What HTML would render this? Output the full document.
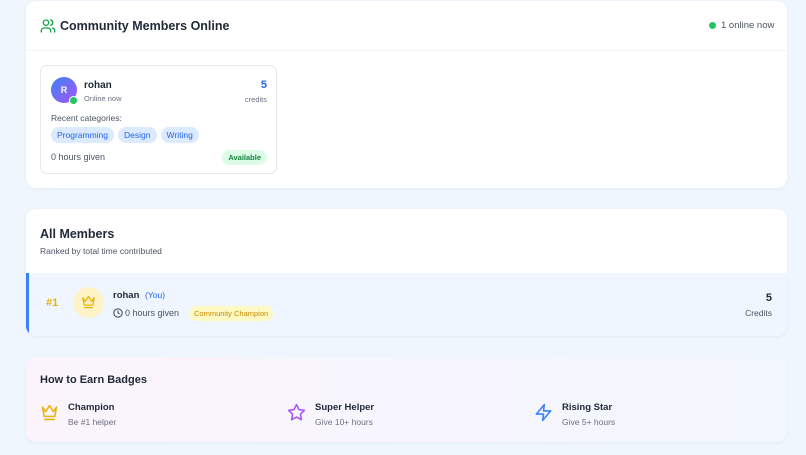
<!DOCTYPE html><html><head><style>
*{box-sizing:border-box;margin:0;padding:0}
body{width:806px;height:455px;overflow:hidden;background:#eff6fe;font-family:"Liberation Sans",sans-serif;color:#1f2937;position:relative}
.card{position:absolute;left:26px;width:761px;background:#fff;border-radius:10px;box-shadow:0 1px 3px rgba(0,0,0,.05)}
.abs{position:absolute}
.tag{display:inline-block;background:#dbeafe;color:#2563eb;font-size:8.5px;padding:3px 6px;border-radius:9px;margin-right:4px}
</style></head><body>
<div class="card" style="top:1px;height:187px">
 <div class="abs" style="left:0;right:0;top:49px;border-top:1px solid #f1f3f6"></div>
 <svg class="abs" style="left:14px;top:17px" width="16" height="16" viewBox="0 0 24 24" fill="none" stroke="#16a34a" stroke-width="2" stroke-linecap="round"><circle cx="9" cy="7" r="4"/><path d="M2 21v-2a4 4 0 0 1 4-4h6a4 4 0 0 1 4 4v2"/><path d="M16 3.1a4 4 0 0 1 0 7.8M22 21v-2a4 4 0 0 0-3-3.9"/></svg>
 <div class="abs" style="left:34px;top:18px;font-size:12.5px;font-weight:bold;color:#1f2937">Community Members Online</div>
 <div class="abs" style="left:683px;top:21px;width:7px;height:7px;border-radius:50%;background:#22c55e"></div>
 <div class="abs" style="left:695px;top:19px;font-size:9.5px;color:#4b5563">1 online now</div>
 <div class="abs" style="left:14px;top:64px;width:237px;height:109px;border:1px solid #e5e7eb;border-radius:7px">
  <div class="abs" style="left:10px;top:11px;width:26px;height:26px;border-radius:50%;background:linear-gradient(135deg,#3b82f6,#a855f7);color:#fff;font-size:9px;font-weight:bold;text-align:center;line-height:26px">R</div>
  <div class="abs" style="left:28px;top:30px;width:9px;height:9px;border-radius:50%;background:#22c55e;border:1.5px solid #fff"></div>
  <div class="abs" style="left:43px;top:14px;font-size:10px;font-weight:bold">rohan</div>
  <div class="abs" style="left:43px;top:28px;font-size:7.5px;color:#6b7280">Online now</div>
  <div class="abs" style="right:9px;top:13px;font-size:11px;font-weight:bold;color:#2563eb">5</div>
  <div class="abs" style="right:9px;top:29px;font-size:7.5px;color:#6b7280">credits</div>
  <div class="abs" style="left:10px;top:47px;font-size:8.5px;color:#4b5563">Recent categories:</div>
  <div class="abs" style="left:10px;top:59px;white-space:nowrap"><span class="tag">Programming</span><span class="tag">Design</span><span class="tag">Writing</span></div>
  <div class="abs" style="left:10px;top:86px;font-size:9px;color:#4b5563">0 hours given</div>
  <div class="abs" style="right:9px;top:84px;font-size:7.5px;color:#15803d;background:#dcfce7;padding:3px 6px;border-radius:8px;font-weight:bold">Available</div>
 </div>
</div>
<div class="card" style="top:209px;height:127px;overflow:hidden">
 <div class="abs" style="left:14px;top:18px;font-size:12.5px;font-weight:bold">All Members</div>
 <div class="abs" style="left:14px;top:37px;font-size:8.5px;color:#4b5563">Ranked by total time contributed</div>
 <div class="abs" style="left:0;right:0;top:64px;height:63px;background:#eff6ff;border-left:3px solid #3b82f6">
  <div class="abs" style="left:17px;top:24px;font-size:11px;font-weight:bold;color:#eab308">#1</div>
  <div class="abs" style="left:44px;top:14px;width:31px;height:31px;border-radius:50%;background:#fef3c7"></div>
  <svg class="abs" style="left:52px;top:22px" width="15" height="14" viewBox="0 0 24 22" fill="none" stroke="#eab308" stroke-width="2" stroke-linejoin="round"><path d="M3 4l4 6 5-8 5 8 4-6-2 12H5z"/><path d="M5 20h14"/></svg>
  <div class="abs" style="left:84px;top:17px;font-size:9.5px;font-weight:bold">rohan <span style="color:#2563eb;font-weight:normal;font-size:8.5px;margin-left:3px">(You)</span></div>
  <svg class="abs" style="left:84px;top:35px" width="10" height="10" viewBox="0 0 24 24" fill="none" stroke="#374151" stroke-width="2.4"><circle cx="12" cy="12" r="10"/><path d="M12 6v6l4 2"/></svg>
  <div class="abs" style="left:96px;top:35px;font-size:9px;color:#4b5563">0 hours given</div>
  <div class="abs" style="left:160px;top:33px;font-size:7.5px;color:#ca8a04;background:#fef9c3;padding:3px 5px;border-radius:8px">Community Champion</div>
  <div class="abs" style="right:15px;top:19px;font-size:11px;font-weight:bold">5</div>
  <div class="abs" style="right:15px;top:35px;font-size:8.5px;color:#4b5563">Credits</div>
 </div>
</div>
<div class="card" style="top:357px;height:85px;background:linear-gradient(90deg,#fbf4fc,#f2f6fe)">
 <div class="abs" style="left:14px;top:17px;font-size:11px;font-weight:bold">How to Earn Badges</div>
 <svg class="abs" style="left:14px;top:47px" width="19" height="17" viewBox="0 0 24 22" fill="none" stroke="#eab308" stroke-width="2" stroke-linejoin="round"><path d="M3 4l4 6 5-8 5 8 4-6-2 12H5z"/><path d="M5 20h14"/></svg>
 <div class="abs" style="left:42px;top:45px;font-size:9.5px;font-weight:bold">Champion</div>
 <div class="abs" style="left:42px;top:60px;font-size:8.5px;color:#6b7280">Be #1 helper</div>
 <svg class="abs" style="left:261px;top:46px" width="19" height="19" viewBox="0 0 24 24" fill="none" stroke="#a855f7" stroke-width="2" stroke-linejoin="round"><path d="M12 2l3.1 6.3 6.9 1-5 4.9 1.2 6.8L12 17.8 5.8 21l1.2-6.8-5-4.9 6.9-1z"/></svg>
 <div class="abs" style="left:289px;top:45px;font-size:9.5px;font-weight:bold">Super Helper</div>
 <div class="abs" style="left:289px;top:60px;font-size:8.5px;color:#6b7280">Give 10+ hours</div>
 <svg class="abs" style="left:508px;top:46px" width="19" height="19" viewBox="0 0 24 24" fill="none" stroke="#3b82f6" stroke-width="2" stroke-linejoin="round"><path d="M13 2L3 14h9l-1 8 10-12h-9z"/></svg>
 <div class="abs" style="left:536px;top:45px;font-size:9.5px;font-weight:bold">Rising Star</div>
 <div class="abs" style="left:536px;top:60px;font-size:8.5px;color:#6b7280">Give 5+ hours</div>
</div>
</body></html>
